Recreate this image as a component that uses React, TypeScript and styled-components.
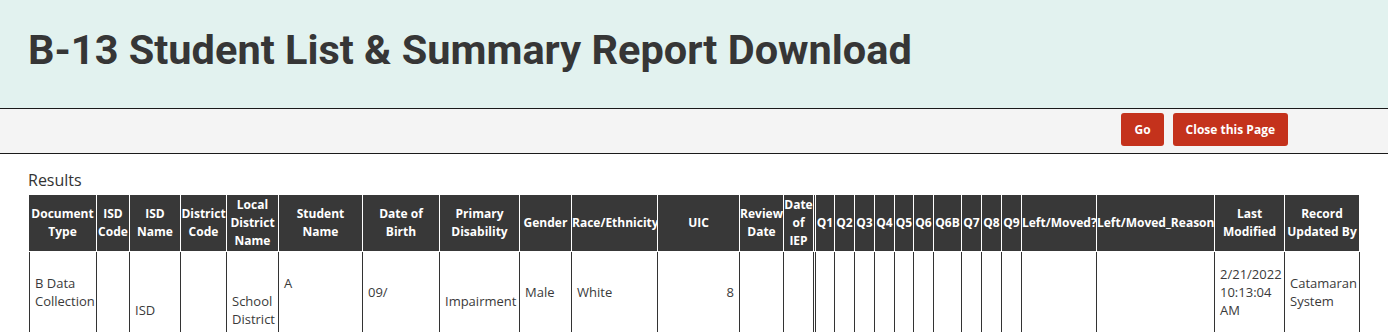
import React from "react";
import styled, { createGlobalStyle } from "styled-components";

const GlobalStyle = createGlobalStyle`
  * {
    box-sizing: border-box;
  }

  body {
    margin: 0;
    background: #ffffff;
    font-family: "Open Sans", "Liberation Sans", sans-serif;
    color: #333333;
  }
`;

interface Column {
  label: string[];
  width: number;
  align?: "left" | "right";
}

const COLUMNS: Column[] = [
  { label: ["Document", "Type"], width: 68 },
  { label: ["ISD", "Code"], width: 33 },
  { label: ["ISD", "Name"], width: 51 },
  { label: ["District", "Code"], width: 46 },
  { label: ["Local", "District", "Name"], width: 52 },
  { label: ["Student", "Name"], width: 84 },
  { label: ["Date of", "Birth"], width: 77 },
  { label: ["Primary", "Disability"], width: 80 },
  { label: ["Gender"], width: 52 },
  { label: ["Race/Ethnicity"], width: 86 },
  { label: ["UIC"], width: 82, align: "right" },
  { label: ["Review", "Date"], width: 44 },
  { label: ["Date", "of", "IEP"], width: 30 },
  { label: [], width: 2 },
  { label: ["Q1"], width: 19 },
  { label: ["Q2"], width: 20 },
  { label: ["Q3"], width: 20 },
  { label: ["Q4"], width: 20 },
  { label: ["Q5"], width: 19 },
  { label: ["Q6"], width: 20 },
  { label: ["Q6B"], width: 28 },
  { label: ["Q7"], width: 20 },
  { label: ["Q8"], width: 20 },
  { label: ["Q9"], width: 20 },
  { label: ["Left/Moved?"], width: 75 },
  { label: ["Left/Moved_Reason"], width: 118 },
  { label: ["Last", "Modified"], width: 70 },
  { label: ["Record", "Updated By"], width: 75 },
];

// blank lines stand in for values that were blanked out of the record
const BLANK = "\u00a0";

const ROW: string[][] = [
  ["B Data", "Collection"],
  [],
  [BLANK, BLANK, "ISD"],
  [],
  [BLANK, BLANK, "School", "District"],
  ["A", BLANK],
  ["09/"],
  [BLANK, "Impairment"],
  ["Male"],
  ["White"],
  ["8"],
  [],
  [],
  [],
  [], [], [], [], [], [], [], [], [], [],
  [],
  [],
  ["2/21/2022", "10:13:04", "AM"],
  ["Catamaran", "System"],
];

const lines = (parts: string[]) =>
  parts.map((part, i) => (
    <React.Fragment key={i}>
      {i > 0 && <br />}
      {part}
    </React.Fragment>
  ));

export default function App() {
  const tableWidth = COLUMNS.reduce((sum, col) => sum + col.width, 0);

  return (
    <>
      <GlobalStyle />
      <PageHeader>
        <Title>B-13 Student List &amp; Summary Report Download</Title>
      </PageHeader>

      <Toolbar>
        <ActionButton type="button">Go</ActionButton>
        <ActionButton type="button">Close this Page</ActionButton>
      </Toolbar>

      <Results>
        <ResultsLabel>Results</ResultsLabel>
        <ResultsTable style={{ width: tableWidth }}>
          <thead>
            <tr>
              {COLUMNS.map((col, i) => (
                <HeadCell key={i} style={{ width: col.width }} $empty={col.label.length === 0}>
                  {lines(col.label)}
                </HeadCell>
              ))}
            </tr>
          </thead>
          <tbody>
            <tr>
              {ROW.map((cell, i) => (
                <BodyCell key={i} $align={COLUMNS[i].align} $empty={COLUMNS[i].label.length === 0}>
                  {lines(cell)}
                </BodyCell>
              ))}
            </tr>
          </tbody>
        </ResultsTable>
      </Results>
    </>
  );
}

const PageHeader = styled.header`
  display: flex;
  align-items: center;
  height: 109px;
  padding: 0 28px 10px;
  background: #e2f2ef;
  border-bottom: 1px solid #1a1a1a;
`;

const Title = styled.h1`
  margin: 0;
  font-family: Roboto, "Liberation Sans", sans-serif;
  font-size: 41.5px;
  font-weight: 700;
  color: #363636;
`;

const Toolbar = styled.div`
  display: flex;
  justify-content: flex-end;
  align-items: flex-start;
  gap: 9px;
  height: 45px;
  padding: 4px 100px 0 0;
  background: #f4f4f4;
  border-bottom: 1px solid #1a1a1a;
`;

const ActionButton = styled.button`
  height: 33px;
  padding: 0 13px;
  border: none;
  border-radius: 3px;
  background: #c4321c;
  color: #ffffff;
  font-family: "Open Sans", "Liberation Sans", sans-serif;
  font-size: 12px;
  font-weight: 700;
  cursor: pointer;
`;

const Results = styled.section`
  padding: 14px 0 0 29px;
`;

const ResultsLabel = styled.div`
  margin: 0 0 3px -1px;
  font-size: 16px;
  line-height: 24px;
  color: #333333;
`;

const ResultsTable = styled.table`
  table-layout: fixed;
  border-collapse: separate;
  border-spacing: 0;
`;

const HeadCell = styled.th<{ $empty?: boolean }>`
  padding: ${({ $empty }) => ($empty ? "0" : "1px 0")};
  background: #383838;
  border-right: 1px solid #ffffff;
  border-bottom: 1px solid #ffffff;
  color: #ffffff;
  font-size: 12px;
  font-weight: 700;
  line-height: 18px;
  text-align: center;
  vertical-align: middle;
  white-space: nowrap;
  overflow: hidden;
`;

const BodyCell = styled.td<{ $align?: "left" | "right"; $empty?: boolean }>`
  height: 80px;
  padding: ${({ $empty }) => ($empty ? "0" : "4px 5px")};
  border-right: 1px solid #333333;
  font-size: 13px;
  line-height: 18px;
  color: #3a3a3a;
  text-align: ${({ $align }) => $align ?? "left"};
  vertical-align: middle;
  white-space: nowrap;
  overflow: hidden;

  &:first-child {
    border-left: 1px solid #333333;
  }
`;
